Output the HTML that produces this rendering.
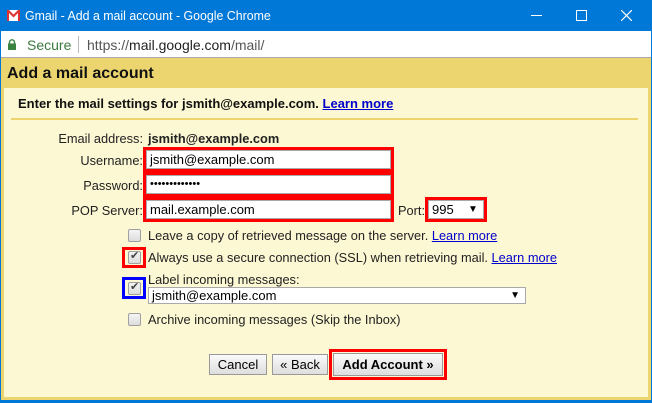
<!DOCTYPE html>
<html><head><style>
*{margin:0;padding:0;box-sizing:border-box}
body{width:652px;height:403px;overflow:hidden;background:#0078d7;font-family:"Liberation Sans",Arial,sans-serif;position:relative}
.a{position:absolute;white-space:nowrap}
.sx{transform-origin:0 0}
.inp{position:absolute;background:#fff;border:1px solid #a9a9a9;font-size:13px;padding-left:3px;line-height:17px}
.red{position:absolute;border:3px solid #f00}
.cb{position:absolute;width:13px;height:13px;border:1px solid #a0a0a0;border-radius:2px;background:linear-gradient(#f4f4f4,#dcdcdc)}
.ck{position:absolute;left:1px;top:-3px;font-size:11px;color:#444}
.btn{position:absolute;border:1px solid #999;background:linear-gradient(#fafafa,#dedede);font-size:13px;text-align:center;line-height:19px;height:21px}
.l{color:#00c;text-decoration:underline}
.lab{position:absolute;right:509px;font-size:13px;color:#222;text-align:right}
.t{font-size:12.8px}
</style></head><body>
<svg class="a" style="left:7px;top:10px" width="13" height="11" viewBox="0 0 13 11"><rect width="13" height="11" fill="#fff"/><path d="M0 0h2l4.5 4.5L11 0h2v11h-2V3L6.5 7.5 2 3v8H0z" fill="#d33"/></svg>
<div class="a sx" style="left:25px;top:8px;font-size:13px;color:#fff;transform:scaleX(0.95)">Gmail - Add a mail account - Google Chrome</div>
<div class="a" style="left:531px;top:15px;width:11px;height:1px;background:#fff"></div>
<div class="a" style="left:576px;top:10px;width:11px;height:11px;border:1px solid #fff"></div>
<svg class="a" style="left:621px;top:10px" width="11" height="11" viewBox="0 0 11 11"><path d="M0 0L11 11M11 0L0 11" stroke="#fff" stroke-width="1.2"/></svg>
<div class="a" style="left:1px;top:31px;width:650px;height:27px;background:#fff;border-bottom:1px solid #aaa"></div>
<svg class="a" style="left:8px;top:39px" width="8" height="11" viewBox="0 0 8 11"><path d="M1.5 5V3.3a2.5 2.5 0 0 1 5 0V5" stroke="#3b8341" stroke-width="1.4" fill="none"/><rect y="4.5" width="8" height="6.5" fill="#3b8341"/></svg>
<div class="a" style="left:27px;top:37px;font-size:14px;color:#3b7a3f">Secure</div>
<div class="a" style="left:78px;top:36px;width:1px;height:17px;background:#bbb"></div>
<div class="a" style="left:87px;top:37px;font-size:14px;color:#555">https://<span style="color:#222">mail.google.com</span>/mail/</div>
<div class="a" style="left:1px;top:58px;width:650px;height:342px;background:#ecd56e"></div>
<div class="a" style="left:7px;top:65px;font-size:16px;font-weight:bold;color:#111">Add a mail account</div>
<div class="a" style="left:4px;top:88px;width:644px;height:309px;background:#fcf8d3"></div>
<div class="a" style="left:18px;top:96px;font-size:13px;font-weight:bold;color:#111">Enter the mail settings for jsmith@example.com. <span class="l">Learn more</span></div>
<div class="a" style="left:11px;top:118px;width:627px;height:2px;background:#ecd56e"></div>
<div class="lab t" style="top:131px">Email address:</div>
<div class="a t" style="left:148px;top:131px;font-weight:bold;color:#222">jsmith@example.com</div>
<div class="lab t" style="top:153px">Username:</div>
<div class="lab t" style="top:178px">Password:</div>
<div class="lab t" style="top:203px">POP Server:</div>
<div class="red" style="left:143px;top:147px;width:251px;height:25px"></div>
<div class="inp" style="left:146px;top:150px;width:245px;height:19px">jsmith@example.com</div>
<div class="red" style="left:143px;top:172px;width:251px;height:25px"></div>
<div class="inp" style="left:146px;top:175px;width:245px;height:19px;font-size:11px">•••••••••••••</div>
<div class="red" style="left:143px;top:197px;width:251px;height:25px"></div>
<div class="inp" style="left:146px;top:200px;width:245px;height:19px">mail.example.com</div>
<div class="a t" style="left:398px;top:203px;color:#222">Port:</div>
<div class="red" style="left:425px;top:197px;width:62px;height:25px"></div>
<div class="inp" style="left:428px;top:200px;width:56px;height:19px">995<span style="position:absolute;left:39px;font-size:10px">▼</span></div>
<div class="cb" style="left:128px;top:229px"></div>
<div class="a t" style="left:148px;top:228px;color:#222">Leave a copy of retrieved message on the server. <span class="l">Learn more</span></div>
<div class="red" style="left:122px;top:247px;width:24px;height:21px"></div>
<div class="cb" style="left:128px;top:251px"><span class="ck">✔</span></div>
<div class="a t" style="left:148px;top:250px;color:#222">Always use a secure connection (SSL) when retrieving mail. <span class="l">Learn more</span></div>
<div class="a" style="left:122px;top:277px;width:24px;height:22px;border:3px solid #00f"></div>
<div class="cb" style="left:128px;top:282px"><span class="ck">✔</span></div>
<div class="a t" style="left:148px;top:272px;color:#222">Label incoming messages:</div>
<div class="inp" style="left:148px;top:287px;width:378px;height:17px;line-height:15px">jsmith@example.com<span style="position:absolute;right:5px;font-size:10px">▼</span></div>
<div class="cb" style="left:128px;top:313px"></div>
<div class="a t" style="left:148px;top:312px;color:#222">Archive incoming messages (Skip the Inbox)</div>
<div class="btn" style="left:209px;top:354px;width:58px">Cancel</div>
<div class="btn" style="left:272px;top:354px;width:56px">« Back</div>
<div class="red" style="left:329px;top:349px;width:118px;height:31px"></div>
<div class="btn" style="left:333px;top:353px;width:110px;height:23px;font-weight:bold;line-height:21px">Add Account »</div>
</body></html>
